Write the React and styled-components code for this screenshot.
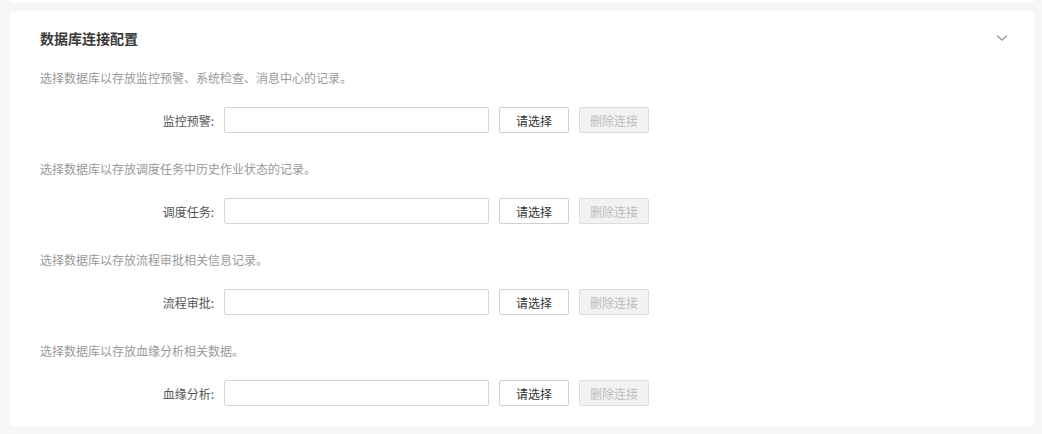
import React from "react";
import styled, { createGlobalStyle } from "styled-components";

const Global = createGlobalStyle`
  html, body { margin: 0; padding: 0; background: #f5f6f8; }
  body { font-family: "Noto Sans CJK SC", "Noto Sans", sans-serif; }
  * { box-sizing: border-box; }
`;

const Page = styled.div`
  padding: 0 8px 7px 10px;
  display: flex;
  flex-direction: column;
  gap: 8px;
`;

const PrevCardEdge = styled.div`
  height: 3px;
  background: #fff;
  border-radius: 0 0 4px 4px;
`;

const Card = styled.section`
  background: #fff;
  border-radius: 4px;
  padding: 17px 30px 12px 30px;
`;

const Header = styled.div`
  display: flex;
  align-items: center;
  justify-content: space-between;
  height: 20px;
  margin-bottom: 20px;
`;

const Title = styled.h2`
  margin: 0;
  font-size: 14px;
  line-height: 20px;
  font-weight: 700;
  color: #3a3a3a;
`;

const Chevron = styled.svg`
  width: 12px;
  height: 8px;
  margin-right: -4px;
  color: #9a9a9a;
`;

const Section = styled.div`
  display: flex;
  flex-direction: column;
  padding-bottom: 26px;
  &:last-child { padding-bottom: 9px; }
`;

const Desc = styled.p`
  margin: 0 0 19px 0;
  font-size: 12px;
  line-height: 20px;
  color: #999;
`;

const Row = styled.div`
  display: flex;
  align-items: center;
  height: 26px;
`;

const Label = styled.label`
  width: 174px;
  margin-right: 10px;
  text-align: right;
  font-size: 12px;
  color: #555;
`;

const Input = styled.input`
  width: 265px;
  height: 26px;
  border: 1px solid #d6d6d6;
  border-radius: 2px;
  padding: 0 8px;
  font-size: 12px;
  font-family: inherit;
  outline: none;
  margin-right: 10px;
`;

const Button = styled.button`
  width: 70px;
  height: 26px;
  border: 1px solid ${(p) => (p.disabled ? "#dcdcdc" : "#d0d0d0")};
  background: ${(p) => (p.disabled ? "#f2f2f2" : "#fff")};
  color: ${(p) => (p.disabled ? "#bdbdbd" : "#333")};
  border-radius: 2px;
  font-size: 12px;
  font-family: inherit;
  padding: 0;
  margin-right: 10px;
  cursor: ${(p) => (p.disabled ? "not-allowed" : "pointer")};
`;

const items = [
  { desc: "选择数据库以存放监控预警、系统检查、消息中心的记录。", label: "监控预警:" },
  { desc: "选择数据库以存放调度任务中历史作业状态的记录。", label: "调度任务:" },
  { desc: "选择数据库以存放流程审批相关信息记录。", label: "流程审批:" },
  { desc: "选择数据库以存放血缘分析相关数据。", label: "血缘分析:" },
];

export default function App() {
  return (
    <>
      <Global />
      <Page>
        <PrevCardEdge />
        <Card>
          <Header>
            <Title>数据库连接配置</Title>
            <Chevron viewBox="0 0 12 8" fill="none">
              <path d="M1 1.5 L6 6 L11 1.5" stroke="currentColor" strokeWidth="1.4" />
            </Chevron>
          </Header>
          {items.map((it) => (
            <Section key={it.label}>
              <Desc>{it.desc}</Desc>
              <Row>
                <Label>{it.label}</Label>
                <Input />
                <Button>请选择</Button>
                <Button disabled>删除连接</Button>
              </Row>
            </Section>
          ))}
        </Card>
      </Page>
    </>
  );
}
